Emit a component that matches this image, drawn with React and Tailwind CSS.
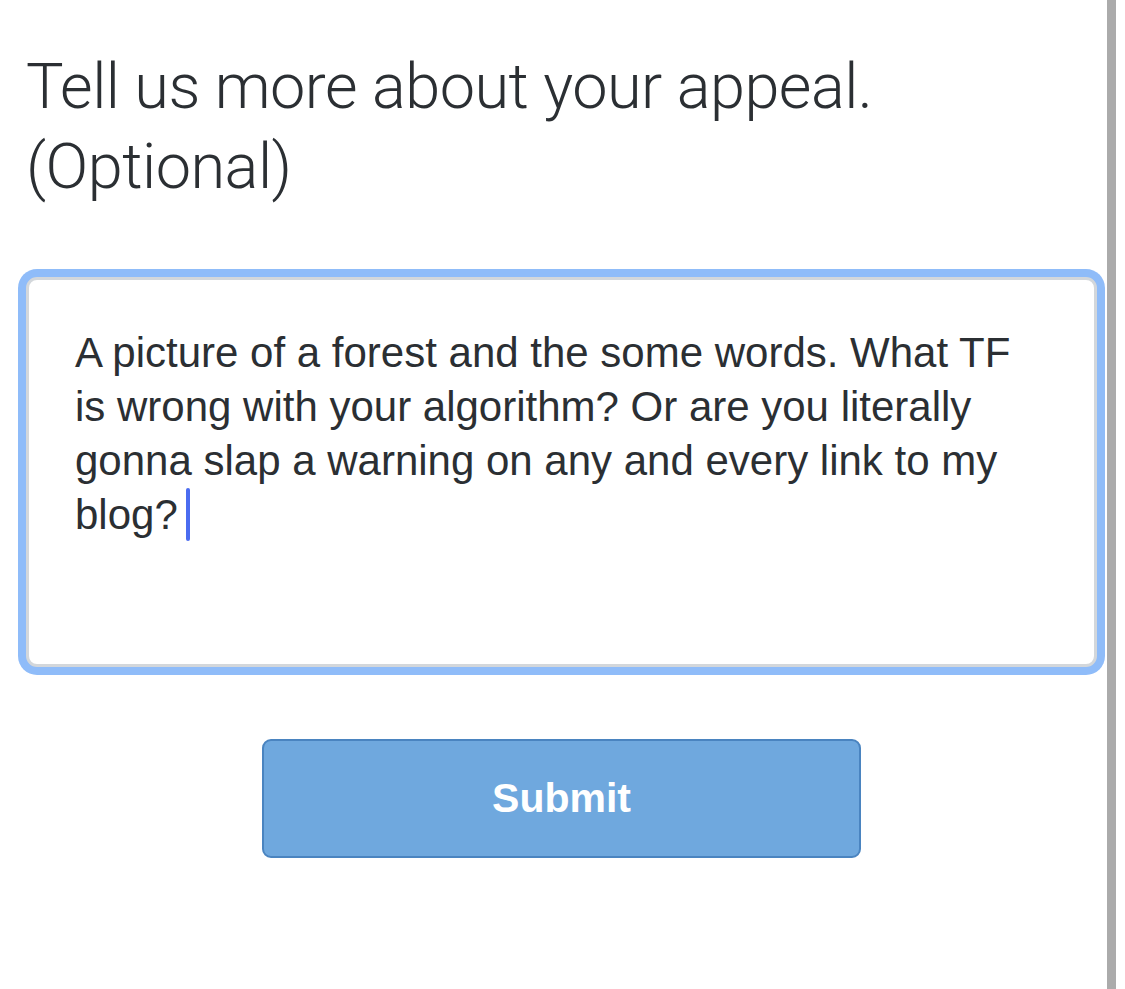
import React from "react";

const App = () => {
  return (
    <div className="flex h-[989px] w-full bg-white">
      <div className="flex-1 pl-[26px] pr-[10px] pt-[47px]">
        <h1 className="text-[63px] leading-[80px] font-light text-[#2b2f33] font-['Roboto',sans-serif] tracking-[-0.5px]">
          Tell us more about your appeal.
          <br />
          (Optional)
        </h1>

        {/* textarea with focus ring */}
        <div className="mt-[70px] h-[390px] rounded-[11px] border-[3px] border-[#d3d7db] bg-white px-[46px] pt-[46px] shadow-[0_0_0_8px_#8fbcf9]">
          <p className="text-[42px] leading-[54px] text-[#2b2f33] font-['Liberation_Sans',Arial,sans-serif]">
            A picture of a forest and the some words. What TF is wrong with your algorithm? Or are you literally gonna slap a warning on any and every link to my blog?
            <span className="ml-[8px] inline-block h-[53px] w-[4px] rounded-full bg-[#4b6cf0] align-top" />
          </p>
        </div>

        <div className="mt-[72px] flex justify-center">
          <button className="h-[119px] w-[599px] rounded-[9px] border-2 border-[#4a84c0] bg-[#6fa8de] text-[41px] font-bold text-white font-['Liberation_Sans',Arial,sans-serif]">
            Submit
          </button>
        </div>
      </div>
      <div className="w-[9px] bg-[#ababab]" />
      <div className="w-[9px] bg-white" />
    </div>
  );
};

export default App;
